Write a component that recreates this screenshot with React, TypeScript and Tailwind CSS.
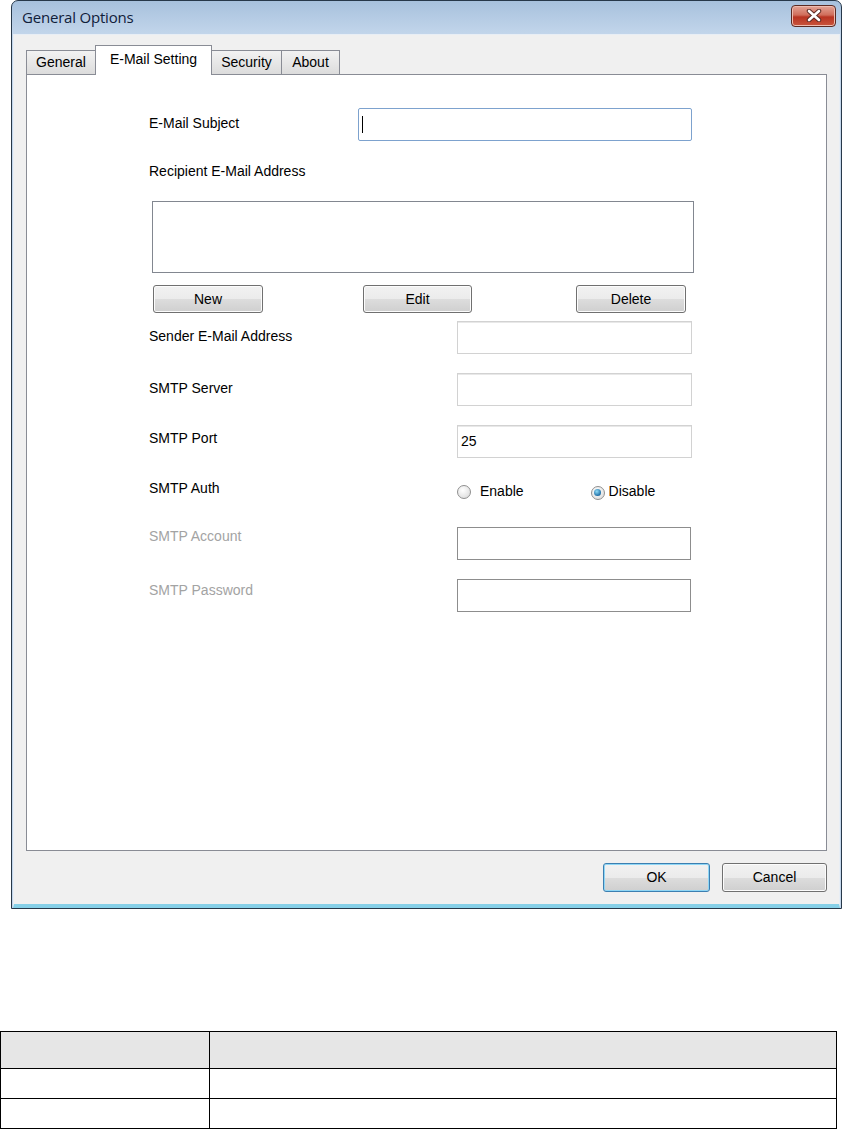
import React from 'react'

const font = "font-['Liberation_Sans',Arial,sans-serif]"

function WinButton({ label, className = '', focused = false }: { label: string; className?: string; focused?: boolean }) {
    return (
        <button
            type="button"
            className={`flex items-center justify-center rounded-[3px] border text-[14px] text-black bg-[linear-gradient(#f2f2f2_0%,#ebebeb_50%,#dddddd_50%,#cfcfcf_100%)] ${
                focused
                    ? 'border-[#3c7fb1] shadow-[inset_0_0_0_1px_#8fd6f5]'
                    : 'border-[#707070] shadow-[inset_0_0_0_1px_#fcfcfc]'
            } ${className}`}
        >
            {label}
        </button>
    )
}

function Field({ value = '', className = '', dark = false }: { value?: string; className?: string; dark?: boolean }) {
    return (
        <div
            className={`flex items-center h-[33px] bg-white border px-[3px] text-[14px] text-black ${
                dark ? 'border-[#8d8d8d]' : 'border-[#d2d2d2] shadow-[inset_0_1px_0_#e8e8e8]'
            } ${className}`}
        >
            {value}
        </div>
    )
}

function Radio({ checked }: { checked?: boolean }) {
    return (
        <span className="relative inline-flex items-center justify-center size-[14px] rounded-full border border-[#8f8f8f] bg-[radial-gradient(circle_at_40%_35%,#ffffff,#d6d6d6)]">
            {checked && (
                <span className="size-[7px] rounded-full bg-[radial-gradient(circle_at_40%_35%,#8fdcf8,#1f6fa7_70%,#0d3f6a)]" />
            )}
        </span>
    )
}

function FormRow({
    label,
    muted = false,
    children,
    top,
    labelClass = '',
}: {
    label: string
    muted?: boolean
    children: React.ReactNode
    top: string
    labelClass?: string
}) {
    return (
        <div className={`flex items-center h-[33px] ${top}`}>
            <span className={`w-[308px] text-[14px] ${muted ? 'text-[#a3a3a3]' : 'text-black'} ${labelClass}`}>{label}</span>
            {children}
        </div>
    )
}

export default function App() {
    return (
        <div className={`bg-white min-h-[1142px] ${font}`}>
            {/* dialog window */}
            <div className="ml-[11px] w-[831px] h-[909px] flex flex-col border border-[#27384a] rounded-t-[7px] bg-[linear-gradient(#a7c1dd,#c3d6eb_34px)] overflow-hidden">
                <div className="flex items-center h-[33px] pl-[10px] pr-[5px]">
                    <span className="text-[15px] text-[#10203a] font-['Open_Sans',sans-serif] tracking-[-0.2px]">General Options</span>
                    <div className="ml-auto mt-[-4px] flex items-center justify-center w-[45px] h-[22px] rounded-[4px] border border-[#5b2a22] bg-[linear-gradient(#e3a496_0%,#d06e5b_45%,#b83422_55%,#c9553d_100%)] shadow-[inset_0_0_0_1px_#eebcb0]">
                        <svg width="16" height="13" viewBox="0 0 16 13">
                            <path d="M3 2 L13 11 M13 2 L3 11" stroke="#5a2a24" strokeWidth="4.5" strokeLinecap="round" />
                            <path d="M3 2 L13 11 M13 2 L3 11" stroke="#ffffff" strokeWidth="2.6" strokeLinecap="round" />
                        </svg>
                    </div>
                </div>

                <div className="flex-1 flex flex-col mx-[1px] bg-[#f0f0f0] border border-[#e8eef5] border-b-[4px] border-b-[#86d0e8] pl-[12px] pt-[10px]">
                    {/* tabs */}
                    <div className="flex items-end h-[29px]">
                        <div className="h-[24px] w-[70px] flex items-center justify-center border border-[#898c95] border-b-0 bg-[linear-gradient(#f2f2f2,#dcdcdc)] text-[14px]">
                            General
                        </div>
                        <div className="relative z-10 -mb-px h-[30px] w-[117px] -mx-[1px] flex items-start pt-[3px] justify-center border border-[#898c95] border-b-0 bg-white text-[14px]">
                            E-Mail Setting
                        </div>
                        <div className="h-[24px] w-[71px] flex items-center justify-center border border-[#898c95] border-b-0 bg-[linear-gradient(#f2f2f2,#dcdcdc)] text-[14px]">
                            Security
                        </div>
                        <div className="h-[24px] w-[58px] flex items-center justify-center border border-[#898c95] border-l-0 border-b-0 bg-[linear-gradient(#f2f2f2,#dcdcdc)] text-[14px]">
                            About
                        </div>
                    </div>

                    {/* tab page */}
                    <div className="w-[801px] h-[777px] border border-[#898c95] bg-white pl-[122px] pt-[33px]">
                        <div className="flex items-center h-[33px]">
                            <span className="w-[209px] text-[14px] mb-[2px]">E-Mail Subject</span>
                            <div className="flex items-center w-[334px] h-[33px] border border-[#7da2ce] rounded-[2px] pl-[3px]">
                                <span className="w-px h-[17px] bg-black" />
                            </div>
                        </div>
                        <div className="mt-[22px] h-[17px] leading-[17px] text-[14px]">Recipient E-Mail Address</div>
                        <div className="mt-[21px] ml-[3px] w-[542px] h-[72px] border border-[#828790] bg-white" />
                        <div className="mt-[12px] flex">
                            <WinButton label="New" className="ml-[4px] w-[110px] h-[28px]" />
                            <WinButton label="Edit" className="ml-[100px] w-[109px] h-[28px]" />
                            <WinButton label="Delete" className="ml-[104px] w-[110px] h-[28px]" />
                        </div>

                        <FormRow label="Sender E-Mail Address" top="mt-[8px]" labelClass="mb-[3px]">
                            <Field className="w-[235px]" />
                        </FormRow>
                        <FormRow label="SMTP Server" top="mt-[19px]" labelClass="mb-[3px]">
                            <Field className="w-[235px]" />
                        </FormRow>
                        <FormRow label="SMTP Port" top="mt-[19px]" labelClass="mb-[6px]">
                            <Field className="w-[235px]" value="25" />
                        </FormRow>
                        <FormRow label="SMTP Auth" top="mt-[17px]" labelClass="mb-[7px]">
                            <div className="flex items-center w-[235px] text-[14px]">
                                <Radio />
                                <span className="ml-[9px]">Enable</span>
                                <span className="ml-[67px]">
                                    <Radio checked />
                                </span>
                                <span className="ml-[4px]">Disable</span>
                            </div>
                        </FormRow>
                        <FormRow label="SMTP Account" muted top="mt-[19px]" labelClass="mb-[14px]">
                            <Field className="w-[234px]" dark />
                        </FormRow>
                        <FormRow label="SMTP Password" muted top="mt-[19px]" labelClass="mb-[11px]">
                            <Field className="w-[234px]" dark />
                        </FormRow>
                    </div>

                    <div className="flex w-[801px] mt-[12px]">
                        <WinButton label="OK" focused className="ml-auto w-[107px] h-[29px]" />
                        <WinButton label="Cancel" className="ml-[12px] w-[105px] h-[29px]" />
                    </div>
                </div>
            </div>

            {/* table below screenshot */}
            <table className="mt-[122px] w-[837px] border-collapse">
                <tbody>
                    <tr className="h-[37px] bg-[#e6e6e6]">
                        <td className="w-[209px] border border-black" />
                        <td className="border border-black" />
                    </tr>
                    <tr className="h-[30px]">
                        <td className="border border-black" />
                        <td className="border border-black" />
                    </tr>
                    <tr className="h-[30px]">
                        <td className="border border-black" />
                        <td className="border border-black" />
                    </tr>
                </tbody>
            </table>
        </div>
    )
}
